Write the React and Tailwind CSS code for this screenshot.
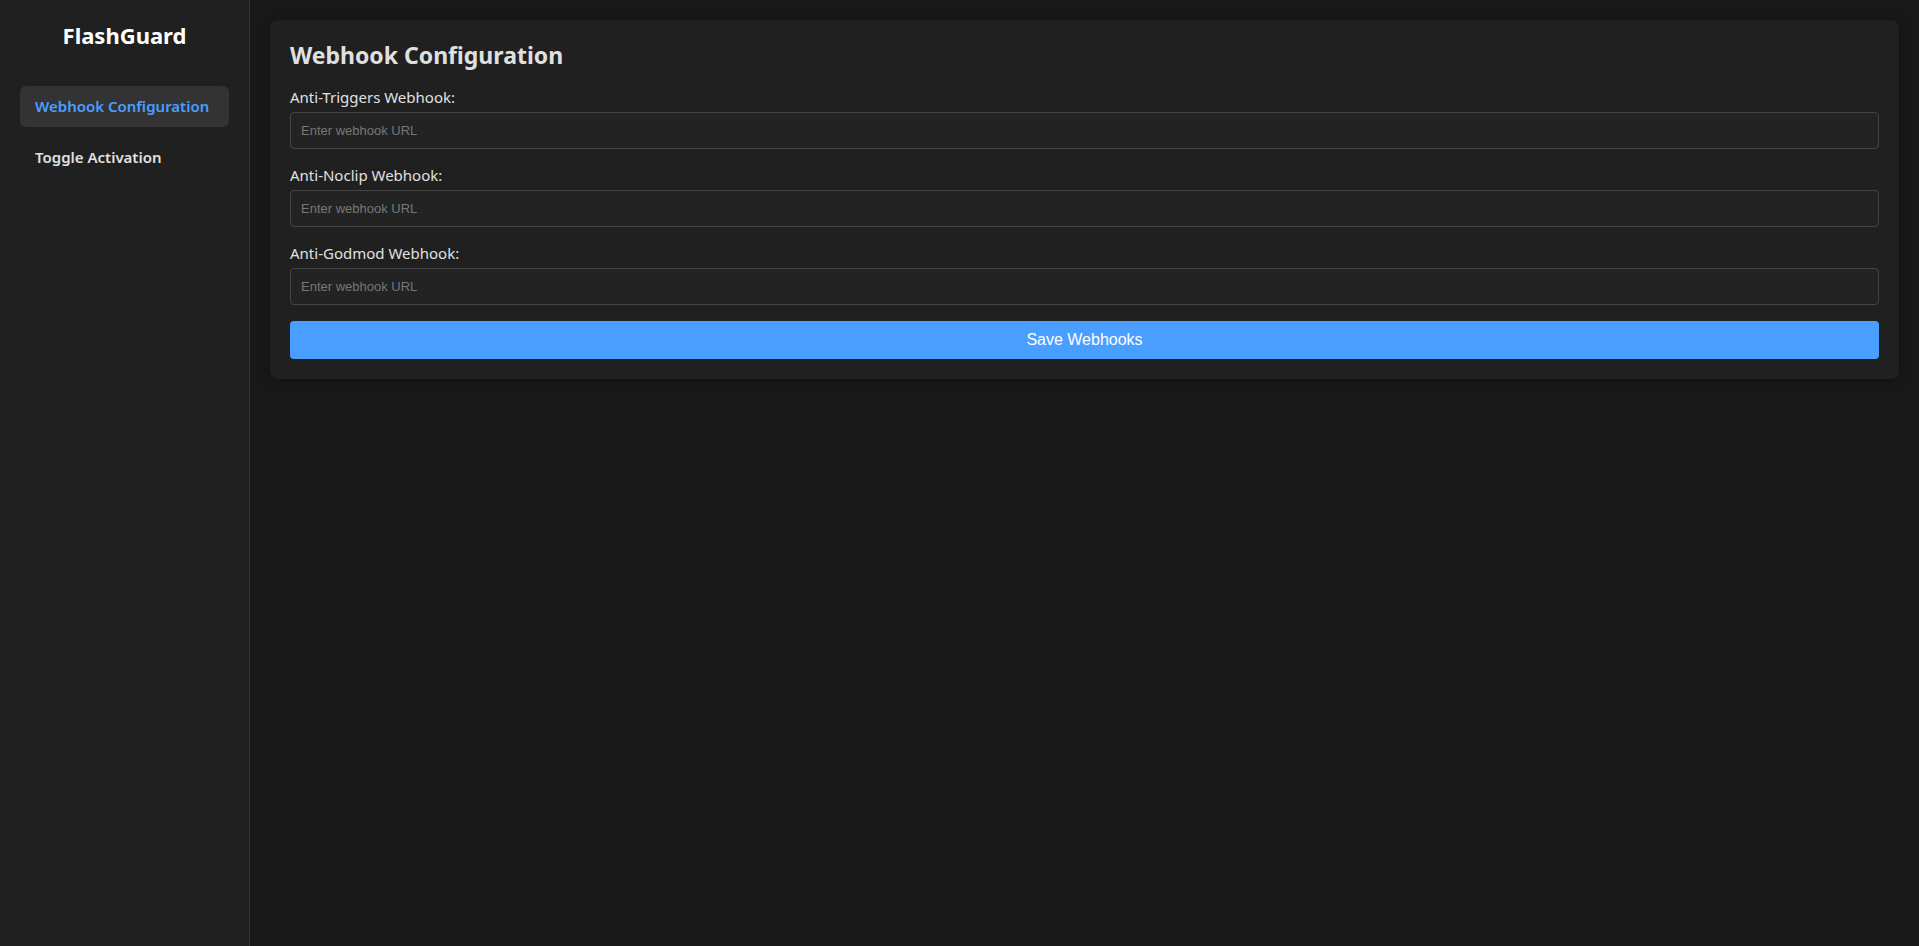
import { useState } from "react";

const fields = [
  { id: "triggers", label: "Anti-Triggers Webhook:" },
  { id: "noclip", label: "Anti-Noclip Webhook:" },
  { id: "godmod", label: "Anti-Godmod Webhook:" },
];

function Sidebar({ active, setActive }) {
  const items = ["Webhook Configuration", "Toggle Activation"];
  return (
    <aside className="w-[250px] shrink-0 bg-[#202020] border-r border-[#333] px-5 pt-5">
      <h1 className="text-center text-[22px] font-bold text-white leading-[30px] mb-9">FlashGuard</h1>
      <nav className="flex flex-col gap-[10px]">
        {items.map((item) => (
          <button
            key={item}
            onClick={() => setActive(item)}
            className={
              "text-left px-[15px] h-[41px] rounded-md text-[15px] font-semibold " +
              (active === item ? "bg-[#333] text-[#4a9eff]" : "text-[#e0e0e0]")
            }
          >
            {item}
          </button>
        ))}
      </nav>
    </aside>
  );
}

export default function App() {
  const [active, setActive] = useState("Webhook Configuration");
  return (
    <div className="flex min-h-screen bg-[#181818] text-[#e0e0e0] font-['Noto_Sans',sans-serif]">
      <Sidebar active={active} setActive={setActive} />
      <main className="flex-1 p-5">
        <div className="bg-[#202020] rounded-lg p-5 shadow-[0_2px_8px_rgba(0,0,0,0.3)]">
          <h2 className="text-[23px] font-bold leading-[30px] mb-[17px]">Webhook Configuration</h2>
          {fields.map((f) => (
            <div key={f.id} className="mb-4">
              <label className="block text-[15px] leading-[20px] mb-[5px]">{f.label}</label>
              <input
                type="text"
                placeholder="Enter webhook URL"
                className="w-full h-[37px] px-[10px] bg-[#232323] border border-[#444] rounded text-[13px] font-['Liberation_Sans',sans-serif] text-[#e0e0e0] placeholder:text-[#777] outline-none"
              />
            </div>
          ))}
          <button className="w-full h-[38px] bg-[#4a9eff] rounded text-white text-[16px] font-['Liberation_Sans',sans-serif]">
            Save Webhooks
          </button>
        </div>
      </main>
    </div>
  );
}
